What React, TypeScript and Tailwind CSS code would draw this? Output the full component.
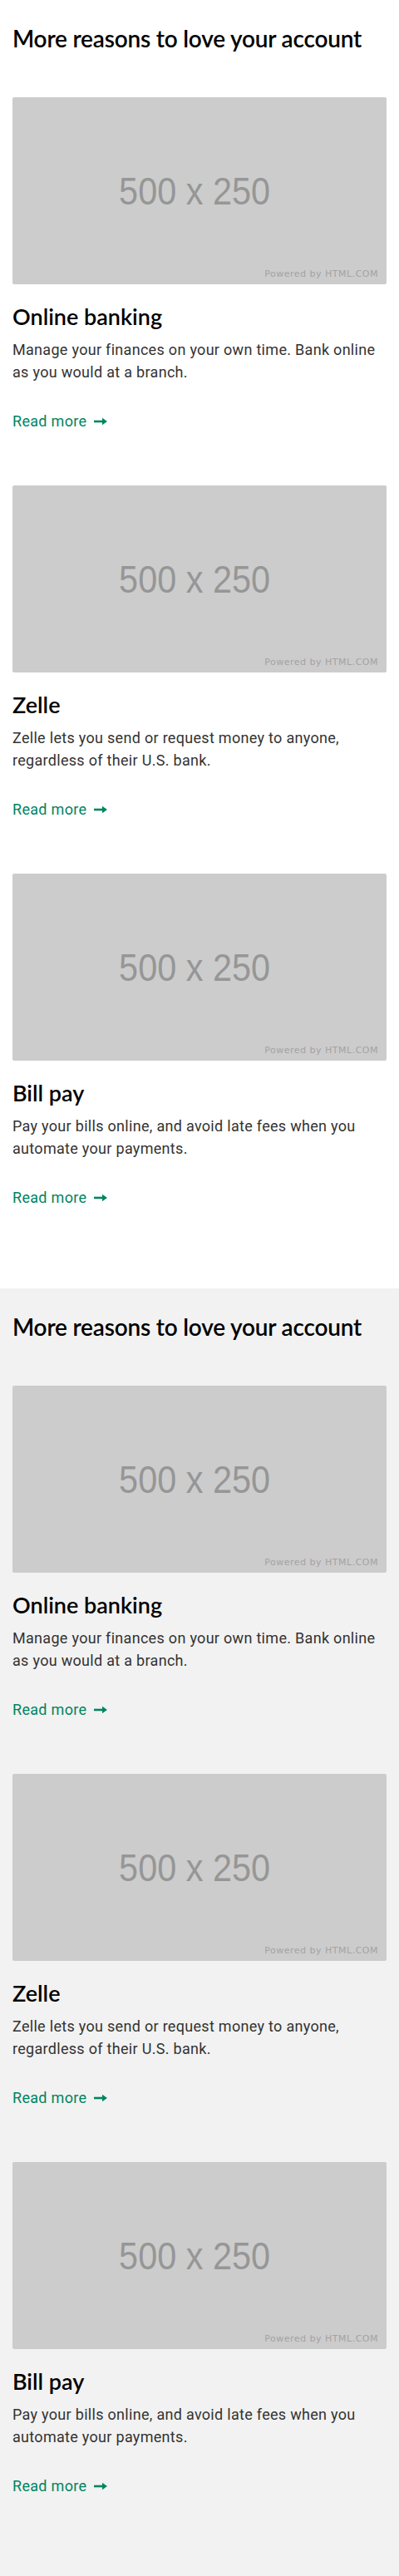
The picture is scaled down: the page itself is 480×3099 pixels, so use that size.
import React from "react";

const cards = [
  {
    title: "Online banking",
    text: "Manage your finances on your own time. Bank online as you would at a branch.",
  },
  {
    title: "Zelle",
    text: "Zelle lets you send or request money to anyone, regardless of their U.S. bank.",
  },
  {
    title: "Bill pay",
    text: "Pay your bills online, and avoid late fees when you automate your payments.",
  },
];

function Placeholder() {
  return (
    <div className="relative flex h-[225px] w-[450px] items-center justify-center rounded-[2px] bg-[#cccccc]">
      <span
        className="mr-[12px] inline-block scale-x-[0.9] text-[46px] leading-none text-[#969696]"
        style={{ fontFamily: '"Liberation Sans", Arial, sans-serif' }}
      >
        500 x 250
      </span>
      <span
        className="absolute bottom-[4px] right-[10px] text-[11px] tracking-[0.5px] text-[#a3a3a3]"
        style={{ fontFamily: '"DejaVu Sans", sans-serif' }}
      >
        Powered by HTML.COM
      </span>
    </div>
  );
}

function Arrow() {
  return (
    <svg width="16" height="10" viewBox="0 0 16 10" className="ml-[9px] inline-block">
      <path d="M0 5 H11" stroke="#00855f" strokeWidth="2.6" />
      <path d="M10 0.8 L16 5 L10 9.2 Z" fill="#00855f" />
    </svg>
  );
}

function Section({ bg }: { bg: string }) {
  return (
    <section className={`${bg} px-[15px] pt-[28px] pb-[96px]`}>
      <h2
        className="whitespace-nowrap text-[28px] font-semibold tracking-[-0.2px] leading-[36px] text-black"
        style={{ fontFamily: 'Lato, sans-serif' }}
      >
        More reasons to love your account
      </h2>
      <div className="mt-[53px] flex flex-col gap-[64px]">
        {cards.map((c) => (
          <div key={c.title} className="flex flex-col">
            <Placeholder />
            <h3
              className="mt-[23px] whitespace-nowrap text-[27px] font-semibold leading-[32px] text-black"
              style={{ fontFamily: 'Lato, sans-serif' }}
            >
              {c.title}
            </h3>
            <p
              className="mt-[10px] text-[18px] tracking-[0.3px] leading-[27px] text-[#333333]"
              style={{ fontFamily: 'Roboto, sans-serif' }}
            >
              {c.text}
            </p>
            <a
              href="#"
              className="mt-[32px] flex items-center text-[18px] tracking-[0.3px] leading-[27px] text-[#00855f]"
              style={{ fontFamily: 'Roboto, sans-serif' }}
            >
              Read more
              <Arrow />
            </a>
          </div>
        ))}
      </div>
    </section>
  );
}

export default function App() {
  return (
    <div className="w-[480px]">
      <Section bg="bg-white" />
      <Section bg="bg-[#f2f2f2]" />
    </div>
  );
}
